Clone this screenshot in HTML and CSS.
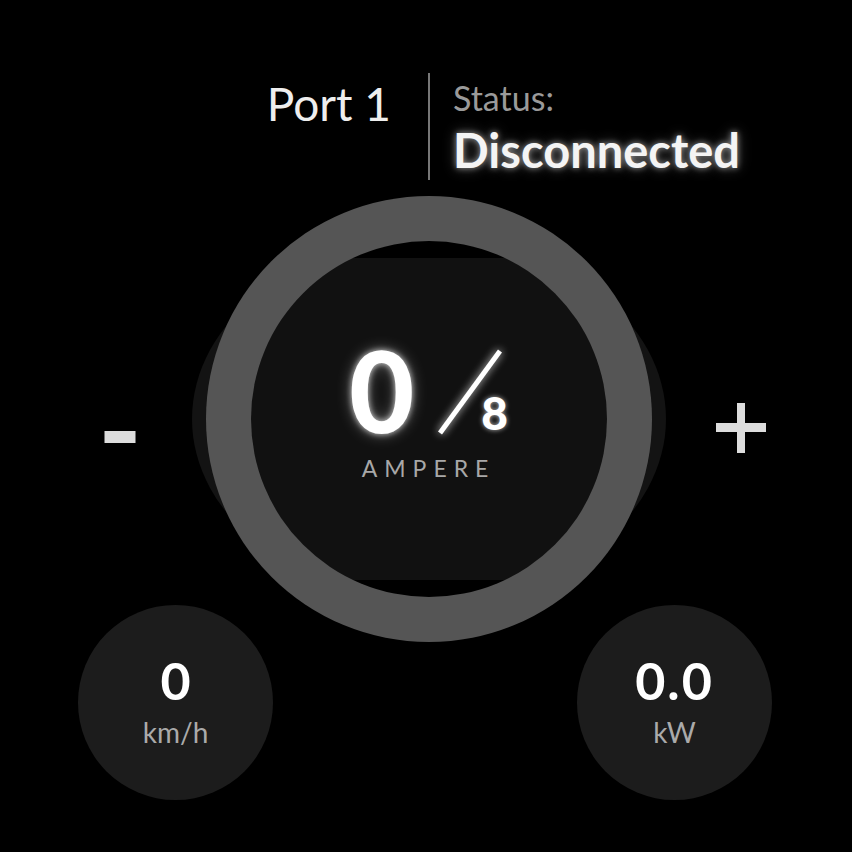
FILE: index.html
```html
<!DOCTYPE html>
<html lang="en">
<head>
    <meta charset="UTF-8">
    <meta name="viewport" content="width=device-width, initial-scale=1.0">
    <title>Charger Port 1</title>
    <link rel="stylesheet" href="styles.css">
</head>
<body>
    <div class="header">
        <div class="port">Port 1</div>
        <div class="divider"></div>
        <div class="status">
            <div class="status-label">Status:</div>
            <div class="status-value">Disconnected</div>
        </div>
    </div>

    <div class="control-row">
        <div class="step minus">
            <svg width="50" height="50" viewBox="0 0 50 50">
                <rect x="9.5" y="19" width="31" height="12" fill="#dddddd"/>
            </svg>
        </div>

        <div class="gauge">
            <div class="gauge-ring">
                <div class="gauge-face">
                    <div class="reading">
                        <div class="reading-value">
                            <span class="amps">0</span>
                            <svg class="slash" width="64" height="86" viewBox="0 0 64 86">
                                <line x1="2" y1="84" x2="62" y2="2" stroke="#ffffff" stroke-width="5"/>
                            </svg>
                            <span class="max">8</span>
                        </div>
                        <div class="unit">AMPERE</div>
                    </div>
                </div>
            </div>
        </div>

        <div class="step plus">
            <svg width="50" height="50" viewBox="0 0 50 50">
                <rect x="21" y="0" width="8" height="50" fill="#dddddd"/>
                <rect x="0" y="20" width="50" height="9" fill="#dddddd"/>
            </svg>
        </div>
    </div>

    <div class="stats">
        <div class="stat">
            <div class="stat-value">0</div>
            <div class="stat-unit">km/h</div>
        </div>
        <div class="stat">
            <div class="stat-value wide">0.0</div>
            <div class="stat-unit">kW</div>
        </div>
    </div>
</body>
</html>
```

FILE: styles.css
```css
* {
    margin: 0;
    padding: 0;
    box-sizing: border-box;
}

body {
    font-family: 'Lato', 'Noto Sans', sans-serif;
    background: #000000;
    color: #ffffff;
    width: 852px;
    height: 852px;
    overflow: hidden;
}

/* header */

.header {
    display: grid;
    grid-template-columns: 1fr 2px 1fr;
    padding-top: 73px;
    padding-left: 6px;
}

.port {
    justify-self: end;
    padding-right: 37px;
    margin-top: 3px;
    font-size: 46px;
    line-height: 1.2;
    color: #eeeeee;
}

.divider {
    height: 107px;
    background: #777777;
}

.status {
    padding-left: 23px;
}

.status-label {
    margin-top: 5px;
    font-size: 34px;
    line-height: 1.2;
    color: #9a9a9a;
}

.status-value {
    margin-top: 3px;
    font-size: 47px;
    font-weight: 700;
    line-height: 1.2;
    color: #f4f4f4;
    text-shadow: 0 0 6px rgba(255, 255, 255, 0.55), 0 0 14px rgba(255, 255, 255, 0.3);
}

/* gauge row */

.control-row {
    display: flex;
    align-items: center;
    justify-content: center;
    margin-top: 16px;
    padding-left: 8px;
}

.step {
    width: 50px;
    height: 50px;
}

.step svg {
    display: block;
}

.step.minus {
    margin-right: 61px;
    margin-top: 36px;
}

.step.plus {
    margin-left: 64px;
    margin-top: 18px;
}

.gauge {
    position: relative;
    width: 446px;
    height: 446px;
}

.gauge::before {
    content: '';
    position: absolute;
    left: -14px;
    top: 43px;
    width: 474px;
    height: 360px;
    border-radius: 50%;
    background: #131313;
}

.gauge-ring {
    position: relative;
    width: 446px;
    height: 446px;
    padding: 45px;
    border-radius: 50%;
    background: #555555;
}

.gauge-face {
    width: 356px;
    height: 356px;
    border-radius: 50%;
    background: linear-gradient(#000000 17px, #111111 17px, #111111 339px, #000000 339px);
    display: flex;
    align-items: center;
    justify-content: center;
}

.reading {
    display: flex;
    flex-direction: column;
    align-items: center;
    padding-bottom: 25px;
}

.reading-value {
    display: flex;
    align-items: flex-end;
}

.amps {
    font-size: 112px;
    font-weight: 900;
    line-height: 1;
    text-shadow: 0 0 6px rgba(255, 255, 255, 0.8), 0 0 16px rgba(255, 255, 255, 0.35);
}

.slash {
    display: block;
    margin-left: 24px;
    margin-bottom: 11px;
    filter: drop-shadow(0 0 4px rgba(255, 255, 255, 0.8));
}

.max {
    margin-left: -21px;
    margin-bottom: 10px;
    font-size: 46px;
    font-weight: 900;
    line-height: 1;
    text-shadow: 0 0 5px rgba(255, 255, 255, 0.7);
}

.unit {
    margin-top: 11px;
    font-size: 23px;
    line-height: 1;
    letter-spacing: 7px;
    color: #a8a8a8;
}

/* bottom stats */

.stats {
    display: flex;
    justify-content: space-between;
    margin-top: -37px;
    padding: 0 80px 0 78px;
}

.stat {
    width: 195px;
    height: 195px;
    padding-bottom: 5px;
    border-radius: 50%;
    background: #1c1c1c;
    display: flex;
    flex-direction: column;
    align-items: center;
    justify-content: center;
}

.stat-value {
    font-size: 52px;
    font-weight: 700;
    line-height: 1;
    color: #ffffff;
}

.stat-value.wide {
    letter-spacing: 2px;
}

.stat-unit {
    margin-top: 12px;
    font-size: 28px;
    line-height: 1;
    color: #aaaaaa;
}
```
